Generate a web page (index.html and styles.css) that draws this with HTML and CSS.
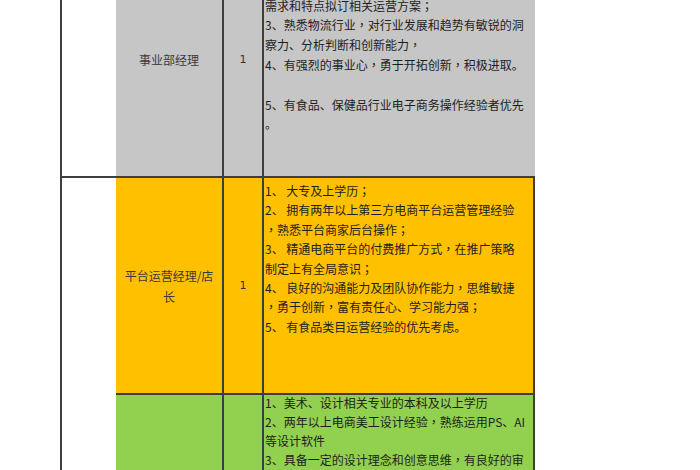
FILE: index.html
```html
<!DOCTYPE html>
<html lang="zh-CN">
<head>
<meta charset="utf-8">
<title>岗位要求</title>
<link rel="stylesheet" href="styles.css">
</head>
<body>
<div class="sheet">
  <table class="grid">
    <colgroup>
      <col class="c1"><col class="c2"><col class="c3"><col class="c4">
    </colgroup>
    <tr class="row gray">
      <td class="blank first"></td>
      <td class="title">事业部经理</td>
      <td class="num">1</td>
      <td class="desc"><div class="lines">1、本科及以上学历<span class="p" lang="zh-TW">，</span>市场营销、电子商务相关专业<span class="p" lang="zh-TW">；</span><br>2、五年以上电商运营管理经验<span class="p" lang="zh-TW">，</span>能根据公司产品<br>需求和特点拟订相关运营方案<span class="p" lang="zh-TW">；</span><br>3、熟悉物流行业<span class="p" lang="zh-TW">，</span>对行业发展和趋势有敏锐的洞<br>察力、分析判断和创新能力<span class="p" lang="zh-TW">，</span><br>4、有强烈的事业心<span class="p" lang="zh-TW">，</span>勇于开拓创新<span class="p" lang="zh-TW">，</span>积极进取。<br>&nbsp;<br>5、有食品、保健品行业电子商务操作经验者优先<br>。</div></td>
    </tr>
    <tr class="row orange">
      <td class="blank" rowspan="2"></td>
      <td class="title">平台运营经理/店<br>长</td>
      <td class="num">1</td>
      <td class="desc"><div class="lines">1、 大专及上学历<span class="p" lang="zh-TW">；</span><br>2、 拥有两年以上第三方电商平台运营管理经验<br><span class="p" lang="zh-TW">，</span>熟悉平台商家后台操作<span class="p" lang="zh-TW">；</span><br>3、 精通电商平台的付费推广方式<span class="p" lang="zh-TW">，</span>在推广策略<br>制定上有全局意识<span class="p" lang="zh-TW">；</span><br>4、 良好的沟通能力及团队协作能力<span class="p" lang="zh-TW">，</span>思维敏捷<br><span class="p" lang="zh-TW">，</span>勇于创新<span class="p" lang="zh-TW">，</span>富有责任心、学习能力强<span class="p" lang="zh-TW">；</span><br>5、 有食品类目运营经验的优先考虑。</div></td>
    </tr>
    <tr class="row green">
      <td class="title">电商美工</td>
      <td class="num">1</td>
      <td class="desc"><div class="lines">1、美术、设计相关专业的本科及以上学历<br>2、两年以上电商美工设计经验<span class="p" lang="zh-TW">，</span>熟练运用PS、AI<br>等设计软件<br>3、具备一定的设计理念和创意思维<span class="p" lang="zh-TW">，</span>有良好的审<br>美能力和色彩搭配能力<span class="p" lang="zh-TW">；</span><br>4、工作认真细致<span class="p" lang="zh-TW">，</span>有责任心和团队精神。</div></td>
    </tr>
  </table>
</div>
</body>
</html>
```

FILE: styles.css
```css
html, body {
  margin: 0;
  padding: 0;
  background: #ffffff;
  overflow: hidden;
}

body {
  font-family: "Noto Sans CJK SC", "Noto Sans", sans-serif;
  font-size: 12px;
  color: #1e1e1e;
}

.sheet {
  margin: -57px 0 0 60px;
}

.grid {
  border-collapse: collapse;
  table-layout: fixed;
  width: 473px;
}

.c1 { width: 55px; }
.c2 { width: 107px; }
.c3 { width: 40px; }
.c4 { width: 271px; }

.grid td {
  padding: 0;
  border: 2px solid #3e3e3e;
}

.gray { height: 234px; }
.orange { height: 217px; }
.green { height: 220px; }

.blank {
  background: #ffffff;
  border-right: 0 !important;
}

.first {
  border-top: 0 !important;
}

.gray td {
  border-top: 0;
}

.gray .title,
.gray .num,
.gray .desc {
  background: #c6c6c6;
}

.gray .desc {
  border-right: 2px solid #c6c6c6;
}

.orange .title,
.orange .num,
.orange .desc {
  background: #ffc000;
}

.green .title,
.green .num,
.green .desc {
  background: #92d050;
  border-bottom: 0;
}

.grid .title {
  border-left: 0;
  text-align: center;
  vertical-align: middle;
  line-height: 21px;
  color: #3a3a3a;
}

.num {
  text-align: center;
  vertical-align: middle;
  font-family: "DejaVu Sans", sans-serif;
  font-size: 11px;
  color: #333333;
}

.desc {
  vertical-align: top;
  text-align: left;
  white-space: nowrap;
  overflow: hidden;
}

.lines {
  padding-left: 1px;
}

.gray .lines {
  padding-top: 13px;
  line-height: 19.8px;
}

.orange .lines {
  padding-top: 3px;
  line-height: 19.4px;
}

.green .lines {
  margin-top: -2px;
  line-height: 19px;
}

.p {
  font-family: "Noto Sans CJK TC", "Noto Sans CJK SC", sans-serif;
}
```
